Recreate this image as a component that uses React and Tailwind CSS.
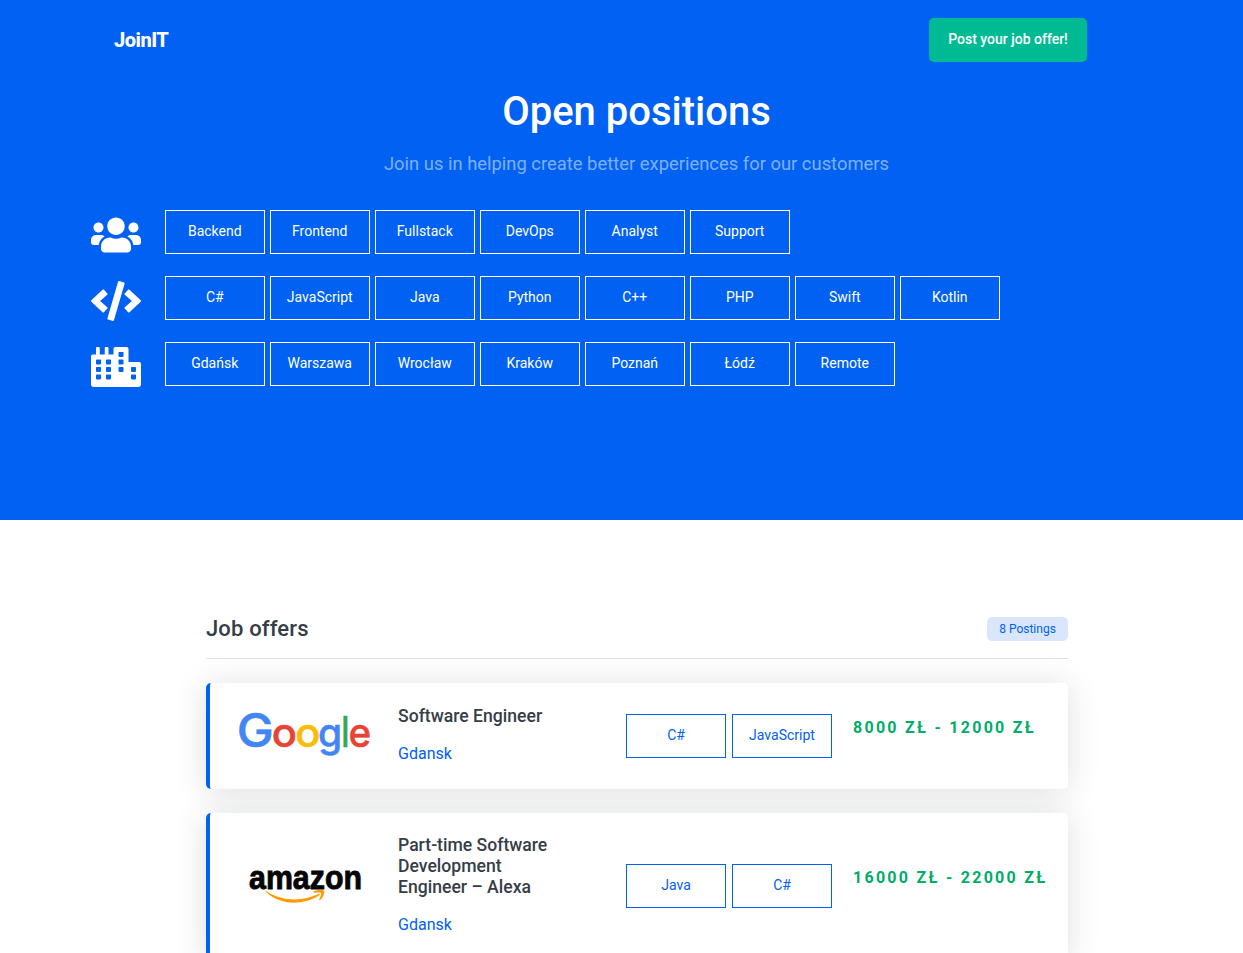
import React from "react";
import { FaUsers, FaCode, FaCity } from "react-icons/fa";

const filters = [
  { icon: FaUsers, items: ["Backend", "Frontend", "Fullstack", "DevOps", "Analyst", "Support"] },
  { icon: FaCode, items: ["C#", "JavaScript", "Java", "Python", "C++", "PHP", "Swift", "Kotlin"] },
  { icon: FaCity, items: ["Gdańsk", "Warszawa", "Wrocław", "Kraków", "Poznań", "Łódź", "Remote"] },
];

function GoogleLogo() {
  const letters = [
    ["G", 236.8, 37, 46, "#4285f4"],
    ["o", 271.7, 25.2, 40, "#ea4335"],
    ["o", 295.2, 25.2, 40, "#fbbc05"],
    ["g", 318, 24.2, 40, "#4285f4"],
    ["l", 341.3, 8.2, 43, "#34a853"],
    ["e", 348.4, 22.6, 40, "#ea4335"],
  ];
  return (
    <svg className="h-[50px] w-[136px] overflow-visible" viewBox="236 711 136 50" role="img" aria-label="Google">
      {letters.map(([ch, x, w, size, fill], i) => (
        <text key={i} x={x} y="747" fontSize={size} textLength={w} lengthAdjust="spacingAndGlyphs" fill={fill} stroke={fill} strokeWidth="0.5" className="font-['Inter',sans-serif] font-medium">
          {ch}
        </text>
      ))}
    </svg>
  );
}

function AmazonLogo() {
  return (
    <svg className="h-[50px] w-[136px] overflow-visible" viewBox="236 861 136 50" role="img" aria-label="Amazon">
      <text x="249" y="889" fontSize="34" textLength="113" lengthAdjust="spacingAndGlyphs" fill="#050505" stroke="#050505" strokeWidth="0.9" className="font-['Liberation_Sans',sans-serif] font-bold">
        amazon
      </text>
      <path d="M265.500 890.500 C281 901.500 302 902 318.500 894 C319.500 893.500 320.300 894.600 319.300 895.300 C303 906 279 905.500 265.300 891.300Z" fill="#ff9900" />
      <path d="M313.300 891.500 C317 889.500 323 889.700 324 890.700 C325 892.500 323 898 320 900 C319.400 900.500 319 900.200 319.300 899.500 C320.300 897 321.600 893.900 321 893.100 C320 892 316.500 892.500 314 892.700Z" fill="#ff9900" />
    </svg>
  );
}

const jobs = [
  { logo: GoogleLogo, title: ["Software Engineer"], city: "Gdansk", tech: ["C#", "JavaScript"], pay: "8000 ZŁ - 12000 ZŁ", padding: "pt-[23px] pb-[23px]" },
  { logo: AmazonLogo, title: ["Part-time Software", "Development", "Engineer – Alexa"], city: "Gdansk", tech: ["Java", "C#"], pay: "16000 ZŁ - 22000 ZŁ", padding: "pt-[22px] pb-6" },
];

function Job({ job }) {
  const Logo = job.logo;
  return (
    <article className={`flex items-start rounded-[5px] border-l-4 border-[#0061f2] bg-white pl-[26px] shadow-[0_2px_32px_rgba(33,40,50,0.15)] ${job.padding}`}>
      <div className="flex w-[162px] items-center self-stretch">
        <Logo />
      </div>
      <div className="w-[228px]">
        <h3 className="text-[17.6px] font-medium leading-[21px] text-[#363d47]">
          {job.title.map((line) => (
            <span key={line} className="block">{line}</span>
          ))}
        </h3>
        <p className="mt-[15px] text-[16px] leading-6 text-[#0061f2]">{job.city}</p>
      </div>
      <div className="flex gap-1.5 self-center">
        {job.tech.map((t) => (
          <button key={t} className="h-11 w-[100px] border border-[#0061f2] pb-0.5 text-[14px] text-[#0061f2]">{t}</button>
        ))}
      </div>
      <p className="ml-[21px] self-center whitespace-nowrap pb-4 text-[16px] font-bold leading-6 tracking-[2.27px] text-[#00ac69]">{job.pay}</p>
    </article>
  );
}

export default function App() {
  return (
    <div className="h-[953px] w-[1243px] overflow-hidden bg-white font-['Roboto',sans-serif]">
      <header className="h-[520px] bg-[#0061f2] text-white">
        <nav className="flex h-[62px] items-start justify-between pl-[114px] pr-[156px] pt-[18px]">
          <a className="text-[20px] font-extrabold leading-[44px] tracking-[-0.5px]">JoinIT</a>
          <button className="h-11 w-[158px] rounded-[5px] bg-[#00ba94] pb-0.5 text-[14px] font-medium">Post your job offer!</button>
        </nav>
        <div className="ml-[206px] w-[861px] pt-[25px] text-center">
          <h1 className="pt-px text-[40px] font-medium leading-[48px]">Open positions</h1>
          <p className="mt-[14px] text-[18.4px] leading-[27px] text-white/50">Join us in helping create better experiences for our customers</p>
        </div>
        <div className="ml-[91px] mt-[33px] flex flex-col gap-[22px]">
          {filters.map(({ icon: Icon, items }, i) => (
            <div key={i} className="flex h-11 items-start">
              <Icon className="mr-6 mt-[5px] h-10 w-[50px]" />
              <div className="flex gap-[5px]">
                {items.map((t) => (
                  <button key={t} className="h-11 w-[100px] border border-white pb-0.5 pr-[0.5px] text-[14px]">{t}</button>
                ))}
              </div>
            </div>
          ))}
        </div>
      </header>
      <main className="ml-[206px] w-[862px] pt-[94px]">
        <div className="flex h-[45px] items-start justify-between border-b border-[#e0e0e0]">
          <h2 className="text-[22px] font-medium leading-[30px] tracking-[0.15px] text-[#363d47]">Job offers</h2>
          <span className="mt-[3px] h-6 w-[81px] rounded-[5px] bg-[#d9e6fb] text-center text-[12px] leading-6 text-[#0061f2]">8 Postings</span>
        </div>
        <div className="mt-6 flex flex-col gap-6">
          {jobs.map((job) => (
            <Job key={job.title[0]} job={job} />
          ))}
        </div>
      </main>
    </div>
  );
}
